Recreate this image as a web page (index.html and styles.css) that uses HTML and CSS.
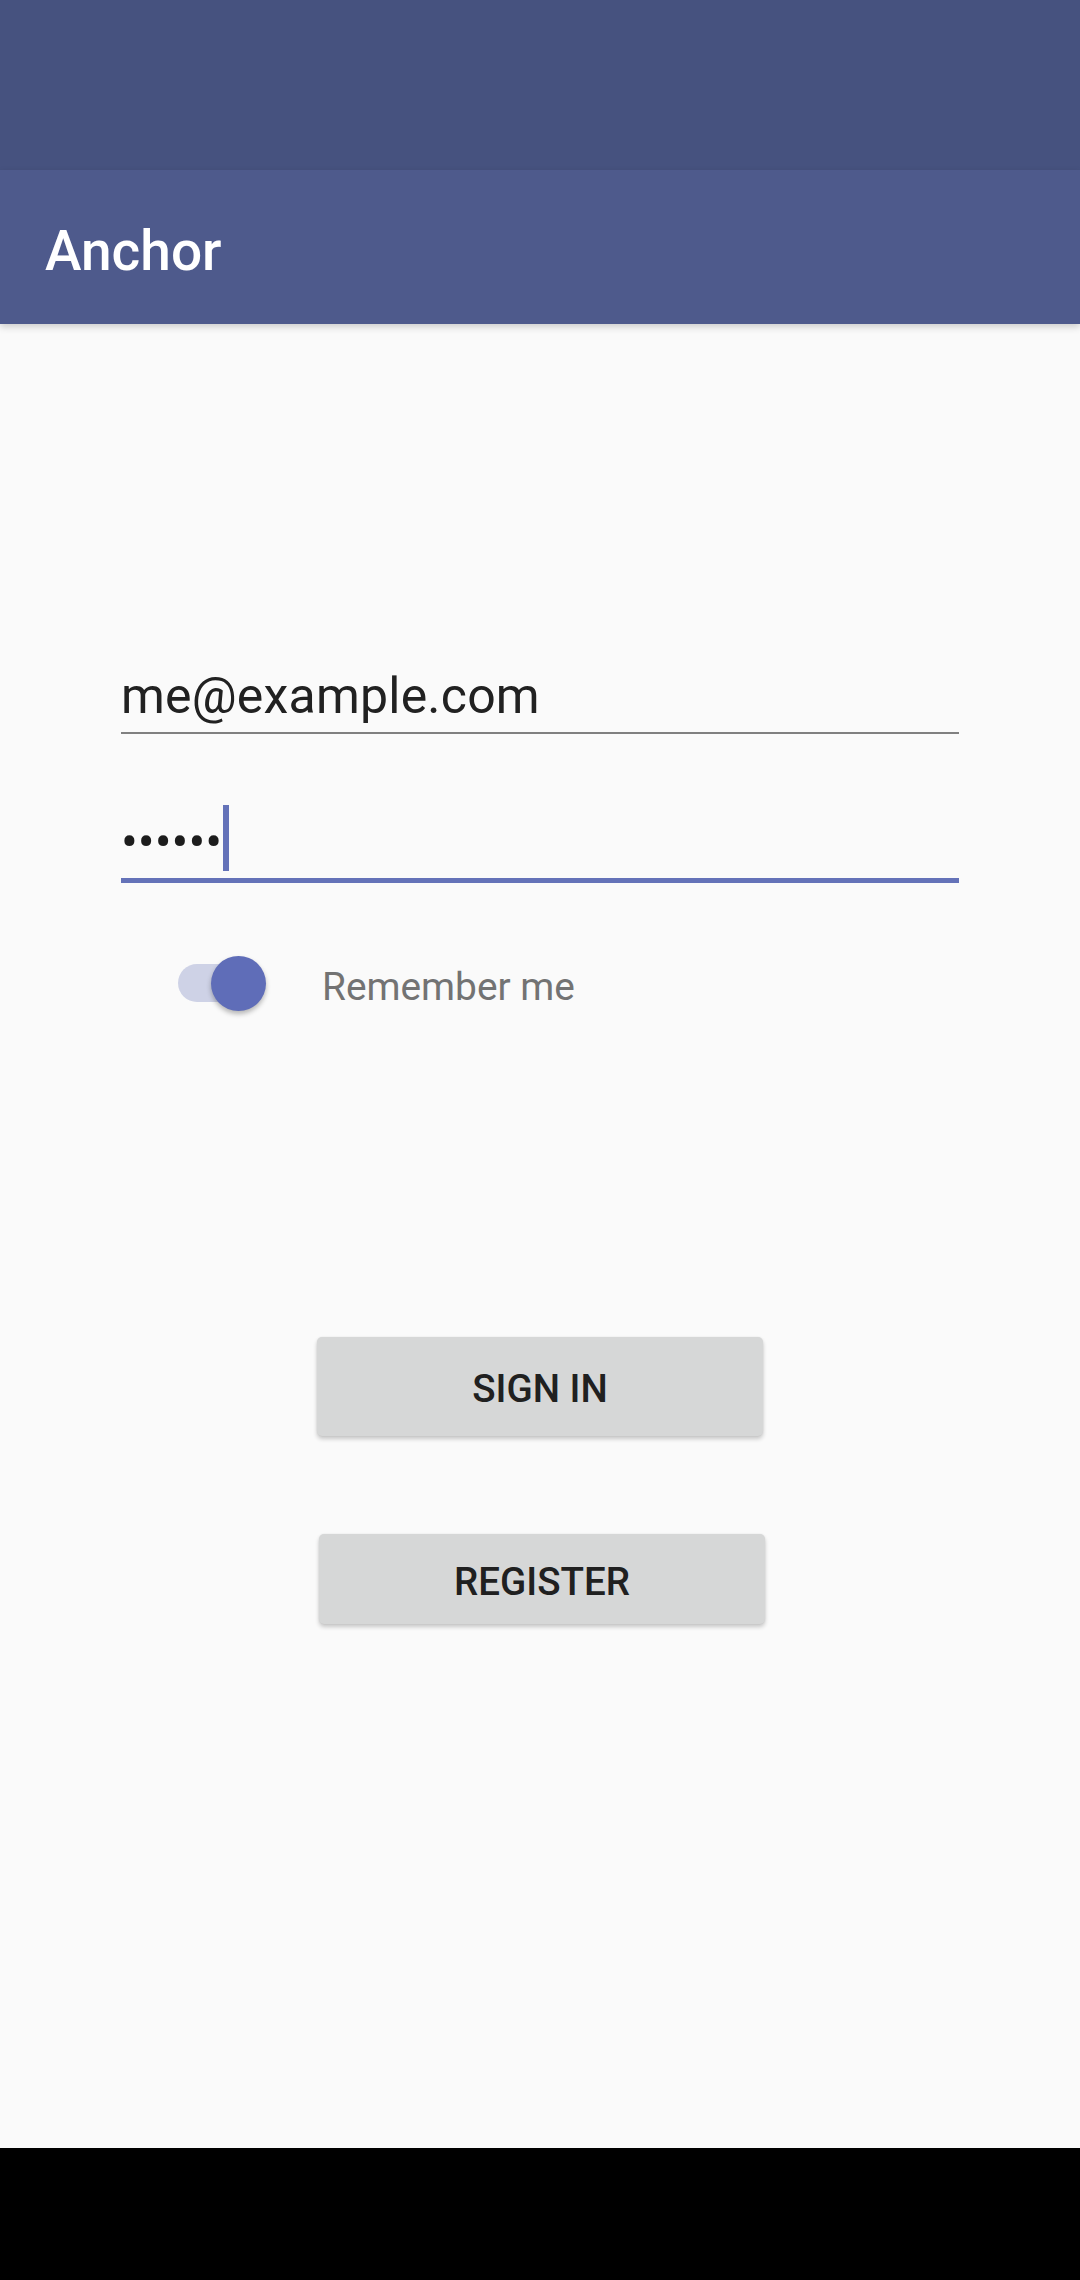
FILE: index.html
```html
<!DOCTYPE html>
<html lang="en">
<head>
<meta charset="utf-8">
<title>Anchor</title>
<link rel="stylesheet" href="styles.css">
</head>
<body>
<div class="screen">
  <div class="status-bar"></div>
  <header class="app-bar"><h1 class="title">Anchor</h1></header>
  <main class="content">
    <div class="form">
      <div class="field field-email">me@example.com</div>
      <div class="field field-password"><span class="dots">••••••</span><span class="caret"></span></div>
      <div class="remember-row">
        <div class="switch"><span class="track"></span><span class="thumb"></span></div>
        <span class="remember-label">Remember me</span>
      </div>
    </div>
    <div class="actions">
      <button class="btn btn-signin">SIGN IN</button>
      <button class="btn btn-register">REGISTER</button>
    </div>
  </main>
  <div class="nav-bar"></div>
</div>
</body>
</html>
```
FILE: styles.css
```css
html, body {
  margin: 0;
  padding: 0;
}
body {
  width: 1080px;
  height: 2280px;
  background: #fafafa;
  font-family: Roboto, "Liberation Sans", sans-serif;
  overflow: hidden;
}
.screen {
  display: flex;
  flex-direction: column;
  height: 2280px;
}
.status-bar {
  height: 170px;
  background: #46527f;
  flex: none;
}
.app-bar {
  height: 154px;
  flex: none;
  background: #4e5a8c;
  display: flex;
  align-items: center;
  padding: 8px 0 0 45px;
  box-sizing: border-box;
  box-shadow: 0 3px 7px rgba(0, 0, 0, 0.18);
  position: relative;
  z-index: 1;
}
.title {
  margin: 0;
  font-size: 55px;
  font-weight: 500;
  color: #ffffff;
}
.content {
  flex: 1;
  display: flex;
  flex-direction: column;
}
.form {
  margin: 343px 121px 0 121px;
  width: 838px;
}
.field {
  font-size: 50px;
  line-height: 58px;
  padding-bottom: 7px;
  color: #212121;
  white-space: nowrap;
  letter-spacing: 0.2px;
}
.field-email {
  border-bottom: 2.75px solid #808080;
}
.field-password {
  margin-top: 78px;
  border-bottom: 5.5px solid #6472b8;
  letter-spacing: 0;
}
.dots {
  color: #1c1c1c;
}
.caret {
  display: inline-block;
  width: 5.5px;
  height: 66px;
  margin-top: -7px;
  margin-left: 1px;
  vertical-align: -12px;
  background: #6472b8;
}
.remember-row {
  display: flex;
  align-items: center;
  margin-top: 72px;
  padding-left: 57px;
}
.switch {
  display: flex;
  align-items: center;
  height: 56px;
}
.track {
  width: 84px;
  height: 38px;
  border-radius: 19px;
  background: #ced2e6;
}
.thumb {
  width: 55px;
  height: 55px;
  border-radius: 50%;
  margin-left: -51px;
  background: #5f6db8;
  box-shadow: 0 3px 5px rgba(0, 0, 0, 0.28);
}
.remember-label {
  margin-left: 56px;
  padding-top: 6px;
  font-size: 38.8px;
  letter-spacing: 0;
  color: #737373;
}
.actions {
  display: flex;
  flex-direction: column;
  align-items: center;
  margin-top: 326px;
}
.btn {
  font-family: Roboto, "Liberation Sans", sans-serif;
  font-size: 38.5px;
  font-weight: 500;
  color: #202020;
  background: #d6d7d7;
  border: none;
  border-radius: 5px;
  width: 446px;
  padding: 4px 0 0 0;
  box-shadow: 0 3px 4px rgba(0, 0, 0, 0.2), 0 0 2px rgba(0, 0, 0, 0.08);
  display: flex;
  align-items: center;
  justify-content: center;
}
.btn-signin {
  height: 99px;
}
.btn-register {
  height: 90px;
  margin-top: 98px;
  margin-left: 4px;
}
.nav-bar {
  height: 132px;
  flex: none;
  background: #000000;
}
```
